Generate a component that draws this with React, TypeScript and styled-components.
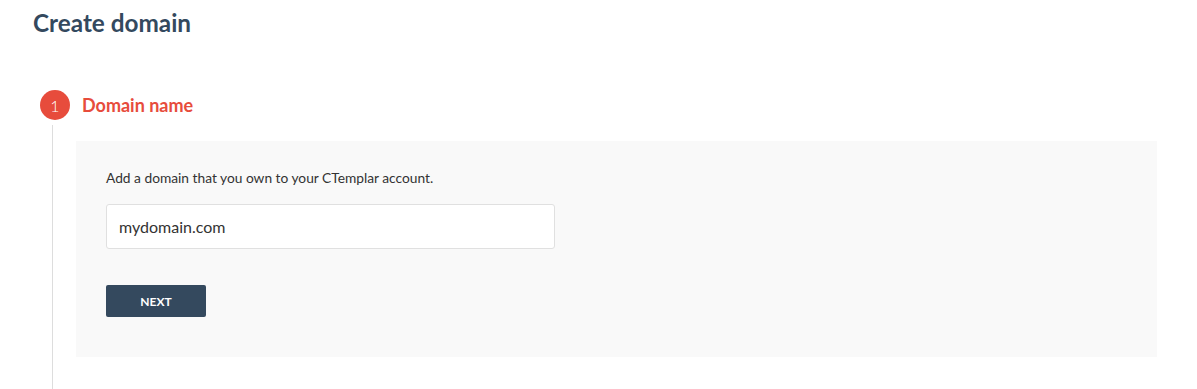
import React from "react";
import styled, { createGlobalStyle } from "styled-components";

const Colors = {
  navy: "#34495e",
  red: "#e74c3c",
  rail: "#dddddd",
  panel: "#f9f9f9",
  border: "#e0e0e0",
  text: "#333333",
};

const GlobalStyle = createGlobalStyle`
  html, body {
    margin: 0;
    padding: 0;
    background: #ffffff;
    font-family: Lato, "Open Sans", "Liberation Sans", sans-serif;
    color: ${Colors.text};
  }
`;

export default function App() {
  return (
    <>
      <GlobalStyle />
      <Page>
        <Title>Create domain</Title>

        <Step>
          <StepHeader>
            <StepNumber>1</StepNumber>
            <StepTitle>Domain name</StepTitle>
          </StepHeader>

          <StepBody>
            <Panel>
              <Hint>Add a domain that you own to your CTemplar account.</Hint>
              <DomainInput type="text" defaultValue="mydomain.com" />
              <NextButton type="button">NEXT</NextButton>
            </Panel>
          </StepBody>
        </Step>
      </Page>
    </>
  );
}

const Page = styled.div`
  padding: 8px 40px 0 33px;
  min-height: 389px;
  box-sizing: border-box;
  overflow: hidden;
`;

const Title = styled.h1`
  margin: 0;
  font-size: 24.3px;
  line-height: 29px;
  font-weight: 700;
  color: ${Colors.navy};
`;

const Step = styled.section`
  margin-top: 53px;
  margin-left: 7px;
`;

const StepHeader = styled.div`
  display: flex;
  align-items: center;
  gap: 12px;
`;

const StepNumber = styled.span`
  display: flex;
  align-items: center;
  justify-content: center;
  width: 30px;
  height: 30px;
  border-radius: 50%;
  background: ${Colors.red};
  color: #ffffff;
  font-size: 16px;
  font-weight: 300;
`;

const StepTitle = styled.h2`
  margin: 0;
  font-size: 18px;
  font-weight: 700;
  color: ${Colors.red};
`;

const StepBody = styled.div`
  margin: 5px 0 0 12px;
  padding: 16px 0 40px 23px;
  border-left: 1px solid ${Colors.rail};
`;

const Panel = styled.div`
  display: flex;
  flex-direction: column;
  align-items: flex-start;
  background: ${Colors.panel};
  padding: 28px 30px 40px;
`;

const Hint = styled.p`
  margin: 0;
  font-size: 13.75px;
  line-height: 18px;
  color: ${Colors.text};
`;

const DomainInput = styled.input`
  margin-top: 17px;
  width: 449px;
  height: 45px;
  box-sizing: border-box;
  padding: 0 12px;
  border: 1px solid ${Colors.border};
  border-radius: 3px;
  background: #ffffff;
  font-family: inherit;
  font-size: 16px;
  color: ${Colors.text};
  outline: none;
`;

const NextButton = styled.button`
  margin-top: 36px;
  width: 100px;
  height: 32px;
  border: none;
  border-radius: 2px;
  background: ${Colors.navy};
  color: #ffffff;
  font-family: inherit;
  font-size: 12px;
  font-weight: 700;
  cursor: pointer;
`;
